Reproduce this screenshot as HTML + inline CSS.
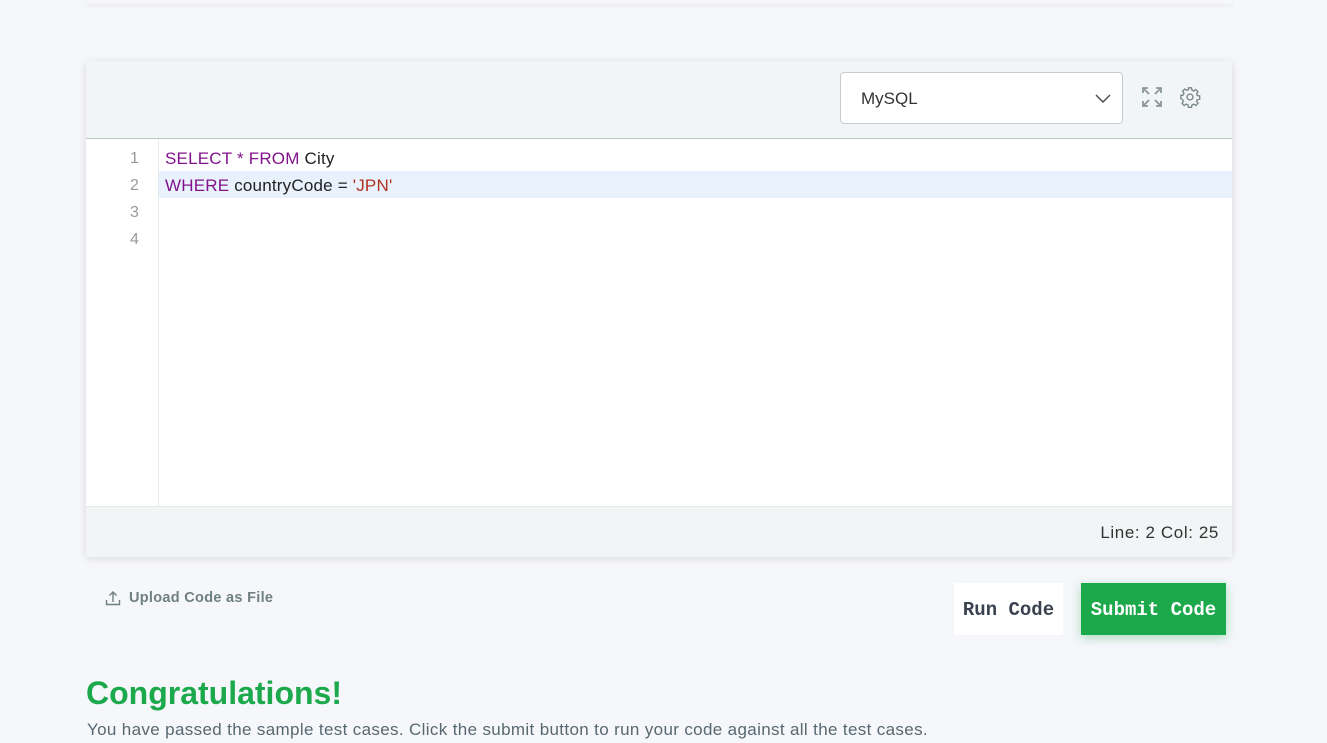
<!DOCTYPE html>
<html><head><style>
body{margin:0;width:1327px;height:743px;background:#f6f7fb;font-family:"Liberation Sans",sans-serif;position:relative;overflow:hidden}
.top{position:absolute;left:86px;top:-10px;width:1146px;height:14px;background:#f6f7fb;box-shadow:0 2px 6px rgba(0,0,0,.05)}
.ed{position:absolute;left:86px;top:61px;width:1146px;height:495px;background:#fff;box-shadow:0 2px 8px rgba(0,0,0,.13)}
.hd{height:77px;background:#f2f5f6;border-bottom:1px solid #b8c8c8;position:relative}
.sel{position:absolute;left:754px;top:11px;width:283px;height:52px;background:#fff;border:1px solid #c8ccd0;border-radius:4px;box-sizing:border-box}
.sel span{position:absolute;left:20px;top:16px;font-size:17px;color:#333}
.gut{position:absolute;left:0;top:78px;width:72px;height:367px;border-right:1px solid #e5eaea}
.ln{position:absolute;left:44px;font-size:16px;color:#999;letter-spacing:.5px}
.cl{position:absolute;left:79px;font-size:17px;color:#222;white-space:pre;letter-spacing:.2px}
.hl{position:absolute;left:73px;top:110px;width:1073px;height:27px;background:#e8f1fc}
.k{color:#80138a}.s{color:#b1321e}
.ft{position:absolute;left:0;top:445px;width:1146px;height:50px;background:#f2f5f6;border-top:1px solid #e5eaea}
.ft span{position:absolute;right:13px;top:16px;font-size:17px;color:#333;letter-spacing:.6px}
.btn{position:absolute;top:583px;height:52px;font-family:"Liberation Mono",monospace;font-weight:bold;font-size:19px;line-height:54px;text-align:center}
</style></head><body>
<div class="top"></div>
<div class="ed">
 <div class="hd">
  <div class="sel"><span>MySQL</span>
   <svg style="position:absolute;right:11px;top:19px" width="16" height="12" viewBox="0 0 16 12"><path d="M1 3l7 7 7-7" fill="none" stroke="#444" stroke-width="1.4"/></svg></div>
  <svg style="position:absolute;left:1055px;top:25px" width="22" height="22" viewBox="0 0 22 22" fill="none" stroke="#8a9898" stroke-width="1.8"><path d="M2 7V2h5M2 2l6 6M15 2h5v5M20 2l-6 6M2 15v5h5M2 20l6-6M20 15v5h-5M20 20l-6-6"/></svg>
  <svg style="position:absolute;left:1093px;top:25px" width="22" height="22" viewBox="0 0 24 24" fill="none" stroke="#7a8888" stroke-width="1.5"><circle cx="12" cy="12" r="3.2"/><path d="M10.3 2h3.4l.5 2.6 1.9.8 2.2-1.5 2.4 2.4-1.5 2.2.8 1.9 2.6.5v3.4l-2.6.5-.8 1.9 1.5 2.2-2.4 2.4-2.2-1.5-1.9.8-.5 2.6h-3.4l-.5-2.6-1.9-.8-2.2 1.5-2.4-2.4 1.5-2.2-.8-1.9L2 13.7v-3.4l2.6-.5.8-1.9-1.5-2.2 2.4-2.4 2.2 1.5 1.9-.8z"/></svg>
 </div>
 <div class="hl"></div>
 <div class="gut"></div>
 <div class="ln" style="top:89px">1</div><div class="ln" style="top:116px">2</div><div class="ln" style="top:143px">3</div><div class="ln" style="top:170px">4</div>
 <div class="cl" style="top:88px"><span class="k">SELECT</span> <span class="k">*</span> <span class="k">FROM</span> City</div>
 <div class="cl" style="top:115px"><span class="k">WHERE</span> countryCode = <span class="s">'JPN'</span></div>
 <div class="ft"><span>Line: 2 Col: 25</span></div>
</div>
<svg style="position:absolute;left:105px;top:590px" width="16" height="16" viewBox="0 0 16 16" fill="none" stroke="#6e8080" stroke-width="1.4"><path d="M8 12V2M4.5 5.5L8 2l3.5 3.5M1.5 10v4.5h13V10"/></svg>
<div style="position:absolute;left:129px;top:590px;font-size:14.5px;font-weight:bold;color:#6e8080;letter-spacing:.3px">Upload Code as File</div>
<div class="btn" style="left:954px;width:109px;background:#fff;color:#39424e">Run Code</div>
<div class="btn" style="left:1081px;width:145px;background:#1ba94c;color:#fff;box-shadow:0 3px 10px rgba(27,169,76,.35)">Submit Code</div>
<div style="position:absolute;left:86px;top:675px;font-size:32px;font-weight:bold;color:#1ba94c">Congratulations!</div>
<div style="position:absolute;left:87px;top:720px;font-size:17px;color:#576871;letter-spacing:.35px">You have passed the sample test cases. Click the submit button to run your code against all the test cases.</div>
</body></html>
